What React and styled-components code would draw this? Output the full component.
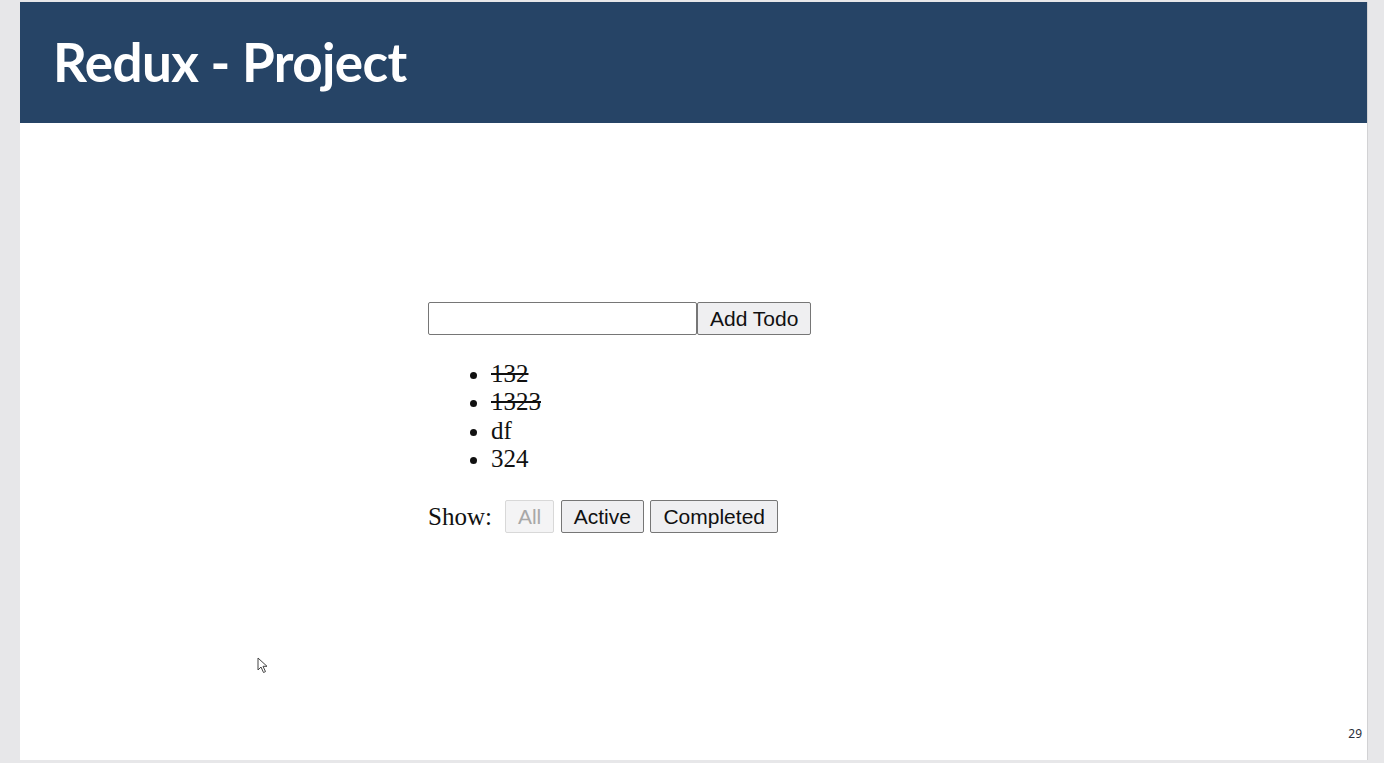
import React from 'react';
import styled, { createGlobalStyle } from 'styled-components';

const GlobalStyle = createGlobalStyle`
  body {
    margin: 0;
    background: #e7e7e9;
  }
`;

const Page = styled.div`
  padding: 2px 0 0 20px;
  height: 763px;
  box-sizing: border-box;
  overflow: hidden;
`;

const Slide = styled.section`
  position: relative;
  width: 1347px;
  height: 758px;
  background: #ffffff;
  border-right: 1px solid #d2d2d4;
  display: flex;
  flex-direction: column;
`;

const Header = styled.header`
  height: 121px;
  background: #264466;
  display: flex;
  align-items: center;
  padding-left: 33px;
`;

const Title = styled.h1`
  margin: 0;
  color: #ffffff;
  font-family: Lato, 'Open Sans', sans-serif;
  font-weight: 700;
  font-size: 53px;
  letter-spacing: -0.6px;
  padding-bottom: 2px;
`;

const Body = styled.main`
  flex: 1;
  display: flex;
  flex-direction: column;
  padding: 179px 0 0 408px;
`;

const Form = styled.form`
  display: flex;
`;

const TextInput = styled.input`
  width: 269px;
  height: 33px;
  box-sizing: border-box;
  border: 1px solid #767676;
  border-radius: 2px;
  margin: 0;
  font-size: 20px;
`;

const Button = styled.button`
  height: 33px;
  box-sizing: border-box;
  margin: 0;
  padding: 0 12px;
  font-family: 'Liberation Sans', Arial, sans-serif;
  font-size: 21px;
  color: ${p => (p.disabled ? '#a8a8a8' : '#111')};
  background: ${p => (p.disabled ? '#f4f4f5' : '#efeff1')};
  border: 1px solid ${p => (p.disabled ? '#d8d8d8' : '#767676')};
  border-radius: 2px;
`;

const TodoList = styled.ul`
  margin: 25px 0 0;
  padding-left: 63px;
  font-family: 'Liberation Serif', 'Times New Roman', serif;
  font-size: 25px;
  line-height: 28.3px;
  color: #111;
`;

const Todo = styled.li`
  text-decoration: ${p => (p.$done ? 'line-through' : 'none')};
`;

const Filters = styled.div`
  display: flex;
  align-items: center;
  gap: 6.5px;
  margin-top: 27px;
`;

const Label = styled.span`
  font-family: 'Liberation Serif', 'Times New Roman', serif;
  font-size: 25px;
  color: #111;
  margin-right: 6.5px;
`;

const SlideNumber = styled.footer`
  align-self: flex-end;
  margin: auto 5px 18px 0;
  font-family: 'Noto Sans', 'Open Sans', sans-serif;
  font-size: 12px;
  color: #2a2f3a;
`;

const Cursor = styled.svg`
  position: absolute;
  left: 237px;
  top: 655px;
`;

const todos = [
  { text: '132', done: true },
  { text: '1323', done: true },
  { text: 'df', done: false },
  { text: '324', done: false },
];

const App = () => {
  return (
    <Page>
      <GlobalStyle />
      <Slide>
        <Header>
          <Title>Redux - Project</Title>
        </Header>
        <Body>
          <Form onSubmit={e => e.preventDefault()}>
            <TextInput />
            <Button type="submit">Add Todo</Button>
          </Form>
          <TodoList>
            {todos.map(t => (
              <Todo key={t.text} $done={t.done}>
                {t.text}
              </Todo>
            ))}
          </TodoList>
          <Filters>
            <Label>Show:</Label>
            <Button disabled>All</Button>
            <Button>Active</Button>
            <Button>Completed</Button>
          </Filters>
        </Body>
        <SlideNumber>29</SlideNumber>
        <Cursor width="12" height="18" viewBox="0 0 12 18">
          <path
            d="M1 1 L1 13 L4 10 L6.5 15.5 L8.5 14.6 L6 9.3 L10 9.3 Z"
            fill="#fff"
            stroke="#444"
            strokeWidth="1"
            strokeLinejoin="round"
          />
        </Cursor>
      </Slide>
    </Page>
  );
};

export default App;
